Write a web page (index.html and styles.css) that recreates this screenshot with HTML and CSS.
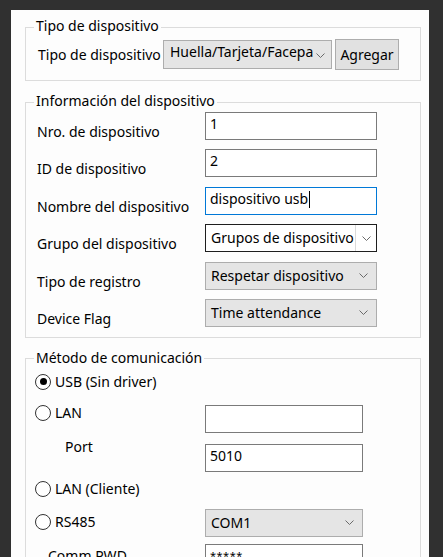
FILE: index.html
```html
<!DOCTYPE html>
<html lang="es">
<head>
<meta charset="utf-8">
<title>Dispositivo</title>
<link rel="stylesheet" href="styles.css">
</head>
<body>
<div class="panel">

  <fieldset class="group">
    <legend>Tipo de dispositivo</legend>
    <div class="type-row">
      <span class="type-label">Tipo de dispositivo</span>
      <div class="combo combo-type">
        <span class="combo-clip">Huella/Tarjeta/Facepalm</span>
        <svg class="chev" width="9" height="5" viewBox="0 0 9 5"><path d="M0.5 0.5 L4.5 4.5 L8.5 0.5" fill="none" stroke="#6a6a6a" stroke-width="1"/></svg>
      </div>
      <button class="btn" type="button">Agregar</button>
    </div>
  </fieldset>

  <fieldset class="group">
    <legend>Información del dispositivo</legend>
    <div class="info-grid">
      <span class="lbl">Nro. de dispositivo</span>
      <div class="tb">1</div>

      <span class="lbl">ID de dispositivo</span>
      <div class="tb">2</div>

      <span class="lbl">Nombre del dispositivo</span>
      <div class="tb tb-focus">dispositivo usb<span class="caret"></span></div>

      <span class="lbl">Grupo del dispositivo</span>
      <div class="combo-edit">
        <span class="combo-edit-text">Grupos de dispositivo</span>
        <span class="combo-edit-btn">
          <svg class="chev" width="9" height="5" viewBox="0 0 9 5"><path d="M0.5 0.5 L4.5 4.5 L8.5 0.5" fill="none" stroke="#6a6a6a" stroke-width="1"/></svg>
        </span>
      </div>

      <span class="lbl">Tipo de registro</span>
      <div class="combo">
        <span>Respetar dispositivo</span>
        <svg class="chev" width="9" height="5" viewBox="0 0 9 5"><path d="M0.5 0.5 L4.5 4.5 L8.5 0.5" fill="none" stroke="#6a6a6a" stroke-width="1"/></svg>
      </div>

      <span class="lbl">Device Flag</span>
      <div class="combo">
        <span>Time attendance</span>
        <svg class="chev" width="9" height="5" viewBox="0 0 9 5"><path d="M0.5 0.5 L4.5 4.5 L8.5 0.5" fill="none" stroke="#6a6a6a" stroke-width="1"/></svg>
      </div>
    </div>
  </fieldset>

  <fieldset class="group">
    <legend>Método de comunicación</legend>
    <div class="comm">
      <div class="comm-row row-usb">
        <span class="opt"><span class="radio checked"></span>USB (Sin driver)</span>
      </div>

      <div class="comm-row row-lan">
        <span class="opt"><span class="radio"></span>LAN</span>
        <div class="tb tb-lan"></div>
      </div>

      <div class="comm-row row-port">
        <span class="sub-lbl port-lbl">Port</span>
        <div class="tb tb-port">5010</div>
      </div>

      <div class="comm-row row-client">
        <span class="opt"><span class="radio"></span>LAN (Cliente)</span>
      </div>

      <div class="comm-row row-rs">
        <span class="opt"><span class="radio"></span>RS485</span>
        <div class="combo">
          <span>COM1</span>
          <svg class="chev" width="9" height="5" viewBox="0 0 9 5"><path d="M0.5 0.5 L4.5 4.5 L8.5 0.5" fill="none" stroke="#6a6a6a" stroke-width="1"/></svg>
        </div>
      </div>

      <div class="comm-row row-pwd">
        <span class="sub-lbl pwd-lbl">Comm PWD</span>
        <div class="tb tb-pwd">*****</div>
      </div>
    </div>
  </fieldset>

</div>
</body>
</html>
```

FILE: styles.css
```css
html, body {
  margin: 0;
  height: 557px;
  overflow: hidden;
}

body {
  background: #303030;
  font-family: "Noto Sans", "Open Sans", sans-serif;
  font-size: 14px;
  line-height: 20px;
  color: #000;
}

/* white form surface */
.panel {
  margin: 10px 0 0 11px;
  width: 418px;
  height: 547px;
  box-sizing: border-box;
  padding: 7px 0 0 14px;
  background: #fdfdfd;
  overflow: hidden;
}

/* group boxes */
.group {
  box-sizing: border-box;
  width: 396px;
  min-width: 0;
  margin: 0;
  padding: 0 0 10px 0;
  border: 1px solid #dcdcdc;
}

.group + .group {
  margin-top: 11px;
}

.group legend {
  margin-left: 8px;
  padding: 0 2px 2px;
  line-height: 18px;
  white-space: nowrap;
}

/* device type row */
.type-row {
  display: flex;
  align-items: center;
  height: 31px;
  margin: 2px 0 0 12px;
}

.type-label {
  width: 125px;
  white-space: nowrap;
}

.btn {
  box-sizing: border-box;
  width: 64px;
  height: 31px;
  margin: 0 0 0 3px;
  padding: 0;
  border: 1px solid #adadad;
  background: #e1e1e1;
  font: inherit;
  color: #000;
}

/* text boxes */
.tb {
  box-sizing: border-box;
  height: 28px;
  padding: 1px 4px 0;
  border: 1px solid #7a7a7a;
  background: #fff;
  white-space: nowrap;
  overflow: hidden;
}

.tb-focus {
  border-color: #0078d7;
}

.caret {
  display: inline-block;
  width: 1px;
  height: 17px;
  margin-left: 1px;
  background: #000;
  vertical-align: -4px;
}

/* drop-down lists */
.combo {
  box-sizing: border-box;
  display: flex;
  align-items: center;
  height: 28px;
  padding-left: 5px;
  border: 1px solid #adadad;
  background: #e5e5e5;
  white-space: nowrap;
}

.combo .chev {
  margin-left: auto;
  margin-right: 8px;
  flex: none;
}

.combo-type {
  width: 169px;
  height: 29px;
  align-items: flex-start;
  padding: 1px 0 0 6px;
}

.combo-type .chev {
  margin-top: 11px;
  margin-right: 6px;
}

.combo-clip {
  width: 143px;
  overflow: hidden;
}

/* editable combo */
.combo-edit {
  box-sizing: border-box;
  display: flex;
  height: 28px;
  border: 1px solid #1e1e1e;
  background: #fff;
  white-space: nowrap;
}

.combo-edit-text {
  flex: 1;
  padding: 3px 0 0 5px;
  overflow: hidden;
}

.combo-edit-btn {
  display: flex;
  align-items: center;
  justify-content: center;
  width: 20px;
  border-left: 1px solid #dadada;
}

/* device information grid */
.info-grid {
  display: grid;
  grid-template-columns: 168px 172px;
  grid-auto-rows: 28px;
  row-gap: 9.4px;
  margin-left: 11px;
}

.lbl {
  margin-top: 10px;
  line-height: 20px;
  white-space: nowrap;
}

/* communication method */
.comm {
  margin-left: 9px;
}

.comm-row {
  display: grid;
  grid-template-columns: 170px 158px;
  align-items: start;
}

.row-usb { margin-top: 3px; height: 20px; }
.row-lan { margin-top: 11px; }
.row-port { margin-top: 4px; }
.row-client { margin-top: 7px; height: 20px; }
.row-rs { margin-top: 10px; }
.row-pwd { margin-top: 7px; }

.row-lan .tb { margin-top: 2px; }
.row-port .tb { margin-top: 7px; }
.row-rs .opt { margin-top: 3px; }
.row-pwd .sub-lbl { margin-top: 2px; }

.opt {
  display: flex;
  align-items: center;
  gap: 4px;
  white-space: nowrap;
}

.radio {
  box-sizing: border-box;
  display: flex;
  align-items: center;
  justify-content: center;
  width: 16px;
  height: 16px;
  border: 1px solid #333;
  border-radius: 50%;
  background: #fff;
  flex: none;
}

.radio.checked {
  border-width: 1.5px;
}

.radio.checked::after {
  content: "";
  width: 7px;
  height: 7px;
  border-radius: 50%;
  background: #000;
}

.sub-lbl {
  white-space: nowrap;
}

.port-lbl { padding-left: 30px; }
.pwd-lbl { padding-left: 13px; }

.tb-pwd {
  font-size: 11px;
  letter-spacing: 0.5px;
}
```
